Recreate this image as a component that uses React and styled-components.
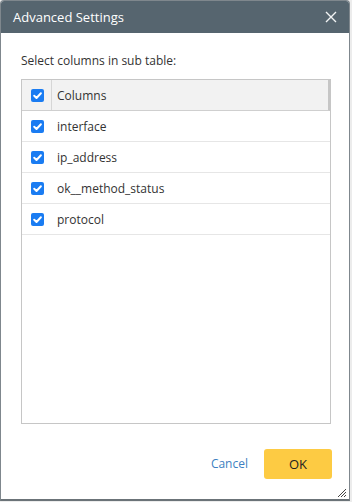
import styled, { createGlobalStyle } from "styled-components";

const columns = ["interface", "ip_address", "ok__method_status", "protocol"];

function Check() {
  return (
    <CheckBox>
      <svg width="13" height="13" viewBox="0 0 13 13">
        <rect width="13" height="13" rx="2" fill="#1a7cf2" />
        <path d="M3.2 6.8 L5.5 9 L9.9 4.2" fill="none" stroke="#fff" strokeWidth="2" strokeLinecap="round" strokeLinejoin="round" />
      </svg>
    </CheckBox>
  );
}

function App() {
  return (
    <>
      <GlobalStyle />
      <Dialog>
        <Header>
          <Title>Advanced Settings</Title>
          <Close>
            <svg width="12" height="12" viewBox="0 0 12 12">
              <path d="M1 1 L11 11 M11 1 L1 11" stroke="#f2f4f5" strokeWidth="1.4" />
            </svg>
          </Close>
        </Header>
        <Body>
          <Label>Select columns in sub table:</Label>
          <Table>
            <HeadRow>
              <CheckCell head>
                <Check />
              </CheckCell>
              <NameCell>Columns</NameCell>
            </HeadRow>
            {columns.map((c) => (
              <Row key={c}>
                <CheckCell>
                  <Check />
                </CheckCell>
                <NameCell>{c}</NameCell>
              </Row>
            ))}
          </Table>
        </Body>
        <Footer>
          <CancelButton>Cancel</CancelButton>
          <OkButton>OK</OkButton>
        </Footer>
        <Grip>
          <svg width="10" height="10" viewBox="0 0 10 10">
            <path d="M9 1 L1 9 M9 4 L4 9 M9 7 L7 9" stroke="#444" strokeWidth="1" />
          </svg>
        </Grip>
      </Dialog>
    </>
  );
}

//--styles--
const GlobalStyle = createGlobalStyle`
  body {
    margin: 0;
    background: #ececec;
    font-family: "Open Sans", "Liberation Sans", sans-serif;
  }
`;

const Dialog = styled.div`
  position: relative;
  box-sizing: border-box;
  width: 350px;
  height: 501px;
  display: flex;
  flex-direction: column;
  background: #fff;
  border: 1px solid #7f878d;
  border-bottom: 2px solid #6b7378;
  border-radius: 4px 4px 0 0;
  overflow: hidden;
`;

const Header = styled.div`
  height: 32px;
  flex-shrink: 0;
  display: flex;
  align-items: center;
  justify-content: space-between;
  background: #56656f;
  padding: 0 12px 0 12px;
`;

const Title = styled.div`
  color: #fff;
  font-size: 13px;
`;

const Close = styled.div`
  display: flex;
  align-items: center;
`;

const Body = styled.div`
  flex: 1;
  display: flex;
  flex-direction: column;
  padding: 21px 18px 0 20px;
  min-height: 0;
`;

const Label = styled.div`
  font-size: 12px;
  color: #333;
  line-height: 14px;
  margin-bottom: 11px;
`;

const Table = styled.div`
  flex: 1;
  border: 1px solid #c6c6c6;
  display: flex;
  flex-direction: column;
`;

const HeadRow = styled.div`
  height: 30px;
  display: flex;
  background: #f2f2f2;
  border-bottom: 1px solid #cfcfcf;
  border-right: 2px solid #c6c6c6;
`;

const Row = styled.div`
  height: 30px;
  display: flex;
  border-bottom: 1px solid #e6e6e6;
`;

const CheckCell = styled.div`
  width: 29px;
  display: flex;
  align-items: center;
  justify-content: center;
  border-right: ${(p) => (p.head ? "1px solid #d6d6d6" : "1px solid transparent")};
`;

const CheckBox = styled.div`
  display: flex;
  margin-left: 1px;
`;

const NameCell = styled.div`
  display: flex;
  align-items: center;
  padding-left: 5px;
  font-size: 12px;
  color: #333;
`;

const Footer = styled.div`
  height: 75px;
  flex-shrink: 0;
  box-sizing: border-box;
  display: flex;
  justify-content: flex-end;
  align-items: center;
  gap: 16px;
  padding: 4px 17px 0 0;
`;

const CancelButton = styled.button`
  background: none;
  border: none;
  padding: 0;
  font-family: inherit;
  font-size: 12px;
  color: #3d7fc1;
`;

const OkButton = styled.button`
  width: 68px;
  height: 30px;
  background: #fdcb43;
  border: none;
  border-radius: 3px;
  font-family: inherit;
  font-size: 13px;
  color: #222;
`;

const Grip = styled.div`
  position: absolute;
  right: 2px;
  bottom: 1px;
  display: flex;
`;

export default App;
